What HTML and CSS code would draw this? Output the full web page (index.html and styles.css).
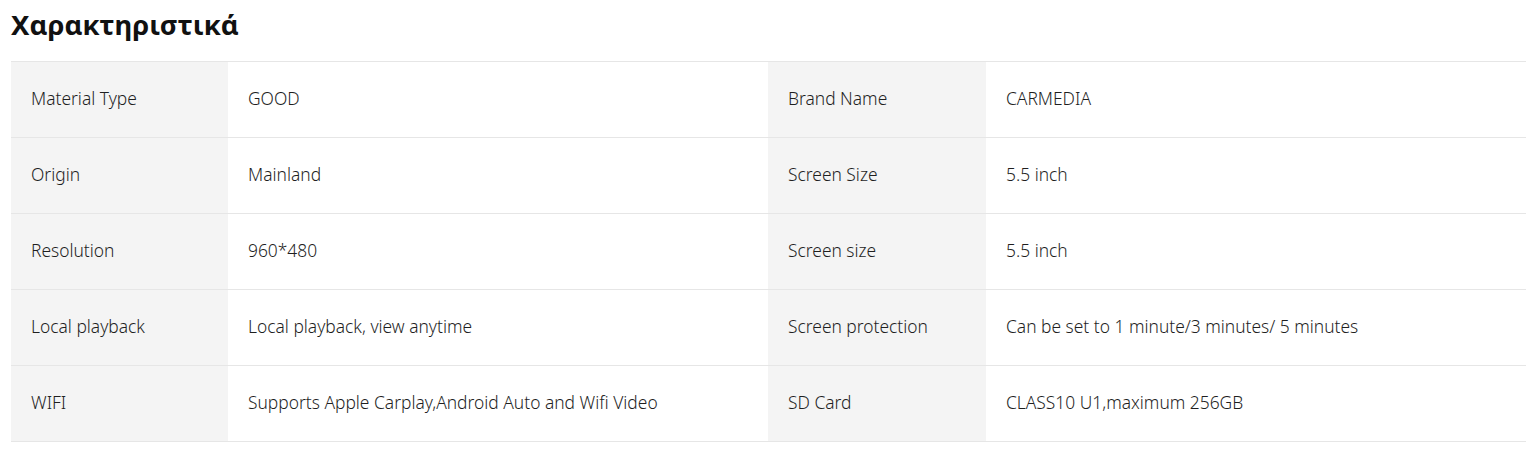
FILE: index.html
```html
<!DOCTYPE html>
<html lang="el">
<head>
<meta charset="utf-8">
<title>Χαρακτηριστικά</title>
<link rel="stylesheet" href="styles.css">
</head>
<body>
<section class="specs">
  <h2 class="specs-title">Χαρακτηριστικά</h2>
  <div class="specs-table">
    <div class="row">
      <div class="label">Material Type</div><div class="value">GOOD</div>
      <div class="label">Brand Name</div><div class="value">CARMEDIA</div>
    </div>
    <div class="row">
      <div class="label">Origin</div><div class="value">Mainland</div>
      <div class="label">Screen Size</div><div class="value">5.5 inch</div>
    </div>
    <div class="row">
      <div class="label">Resolution</div><div class="value">960*480</div>
      <div class="label">Screen size</div><div class="value">5.5 inch</div>
    </div>
    <div class="row">
      <div class="label">Local playback</div><div class="value">Local playback, view anytime</div>
      <div class="label">Screen protection</div><div class="value">Can be set to 1 minute/3 minutes/ 5 minutes</div>
    </div>
    <div class="row">
      <div class="label">WIFI</div><div class="value">Supports Apple Carplay,Android Auto and Wifi Video</div>
      <div class="label">SD Card</div><div class="value">CLASS10 U1,maximum 256GB</div>
    </div>
  </div>
</section>
</body>
</html>
```

FILE: styles.css
```css
* { box-sizing: border-box; }
html, body { margin: 0; padding: 0; background: #fff; }
body { font-family: "Noto Sans", "Open Sans", sans-serif; color: #1f1f1f; }
.specs { padding: 0 12px 0 11px; }
.specs-title {
  margin: 0;
  height: 61px;
  padding-top: 6px;
  font-size: 27.5px;
  line-height: 38px;
  font-weight: 700;
  color: #111;
}
.specs-table { border-top: 1px solid #e6e6e6; }
.row {
  display: grid;
  grid-template-columns: 217px 540px 218px 540px;
  border-bottom: 1px solid #e6e6e6;
  height: 76px;
}
.label, .value {
  display: flex;
  align-items: center;
  padding-left: 20px;
  padding-bottom: 3px;
  font-size: 17.4px;
  font-weight: 350;
}
.label { background: #f4f4f4; }
.value { background: #fff; }
```
